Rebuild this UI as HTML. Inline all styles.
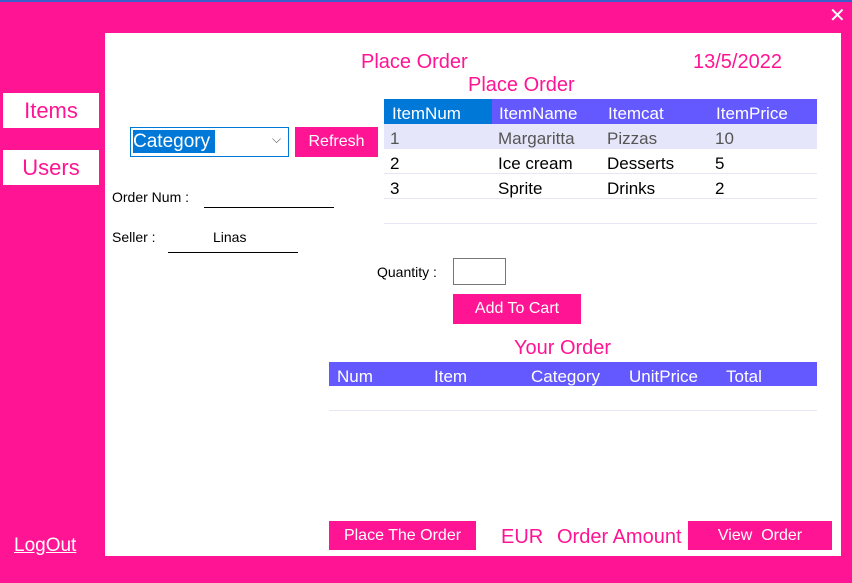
<!DOCTYPE html>
<html><head><style>
body{margin:0;width:852px;height:583px;background:#ff1493;position:relative;overflow:hidden;font-family:"Liberation Sans",sans-serif}
div,span{position:absolute;box-sizing:border-box}
.p{color:#ff1493}
.w{background:#fff}
.btn{background:#ff1493;color:#fff;text-align:center;font-size:16px}
.hd{background:#6459ff;color:#fff;font-size:17px}
.t{font-size:17px;color:#000}
.line{border-bottom:1px solid #e6e6f5}
</style></head><body>
<div style="left:0;top:0;width:852px;height:2px;background:#3a5fc8"></div>
<div style="left:829px;top:3px;color:#fff;font-size:20px;font-weight:100">✕</div>
<div class="w" style="left:105px;top:33px;width:736px;height:523px"></div>
<div class="w p" style="left:3px;top:93px;width:96px;height:35px;font-size:22px;text-align:center;line-height:35px">Items</div>
<div class="w p" style="left:3px;top:150px;width:96px;height:35px;font-size:22px;text-align:center;line-height:35px">Users</div>
<div style="left:14px;top:535px;color:#fff;font-size:19px;text-decoration:underline">LogOut</div>

<div class="p" style="left:361px;top:51px;font-size:20px">Place Order</div>
<div class="p" style="left:693px;top:51px;font-size:20px">13/5/2022</div>
<div class="p" style="left:468px;top:74px;font-size:20px">Place Order</div>

<div style="left:130px;top:127px;width:159px;height:30px;border:1px solid #0078d7"></div>
<div style="left:133px;top:130px;width:82px;height:23px;background:#0078d7;color:#fff;font-size:19px;line-height:23px">Category</div>
<div style="left:272px;top:132px;color:#555;font-size:12px">⌵</div>
<div class="btn" style="left:295px;top:127px;width:83px;height:30px;line-height:30px">Refresh</div>

<div class="t" style="left:112px;top:189px;font-size:14px">Order Num :</div>
<div style="left:204px;top:207px;width:130px;border-bottom:1px solid #000"></div>
<div class="t" style="left:112px;top:229px;font-size:14px">Seller :</div>
<div class="t" style="left:213px;top:229px;font-size:14px">Linas</div>
<div style="left:168px;top:252px;width:130px;border-bottom:1px solid #000"></div>

<div class="hd" style="left:384px;top:99px;width:433px;height:25px"></div>
<div class="hd" style="left:384px;top:99px;width:108px;height:25px;background:#0078d7"></div>
<div style="left:384px;top:124px;width:433px;height:25px;background:#e6e6fa"></div>
<div class="line" style="left:384px;top:149px;width:433px;height:25px"></div>
<div class="line" style="left:384px;top:174px;width:433px;height:25px"></div>
<div class="line" style="left:384px;top:199px;width:433px;height:25px"></div>
<div class="hd" style="left:392px;top:104px;background:none">ItemNum</div>
<div class="hd" style="left:499px;top:104px;background:none">ItemName</div>
<div class="hd" style="left:608px;top:104px;background:none">Itemcat</div>
<div class="hd" style="left:716px;top:104px;background:none">ItemPrice</div>
<div class="t" style="left:390px;top:129px;color:#555">1</div><div class="t" style="left:498px;top:129px;color:#555">Margaritta</div><div class="t" style="left:607px;top:129px;color:#555">Pizzas</div><div class="t" style="left:715px;top:129px;color:#555">10</div>
<div class="t" style="left:390px;top:154px">2</div><div class="t" style="left:498px;top:154px">Ice cream</div><div class="t" style="left:607px;top:154px">Desserts</div><div class="t" style="left:715px;top:154px">5</div>
<div class="t" style="left:390px;top:179px">3</div><div class="t" style="left:498px;top:179px">Sprite</div><div class="t" style="left:607px;top:179px">Drinks</div><div class="t" style="left:715px;top:179px">2</div>

<div class="t" style="left:377px;top:264px;font-size:14px">Quantity :</div>
<div style="left:453px;top:258px;width:53px;height:27px;border:1px solid #777"></div>
<div class="btn" style="left:453px;top:294px;width:128px;height:30px;line-height:30px">Add To Cart</div>

<div class="p" style="left:514px;top:337px;font-size:20px">Your Order</div>
<div class="hd" style="left:329px;top:362px;width:488px;height:24px"></div>
<div class="hd" style="left:337px;top:367px;background:none">Num</div>
<div class="hd" style="left:434px;top:367px;background:none">Item</div>
<div class="hd" style="left:531px;top:367px;background:none">Category</div>
<div class="hd" style="left:629px;top:367px;background:none">UnitPrice</div>
<div class="hd" style="left:726px;top:367px;background:none">Total</div>
<div class="line" style="left:329px;top:386px;width:488px;height:25px"></div>

<div class="btn" style="left:329px;top:521px;width:147px;height:29px;line-height:29px">Place The Order</div>
<div class="p" style="left:501px;top:526px;font-size:20px">EUR</div>
<div class="p" style="left:557px;top:526px;font-size:20px">Order Amount</div>
<div class="btn" style="left:688px;top:521px;width:144px;height:29px;line-height:29px">View&nbsp; Order</div>
</body></html>
